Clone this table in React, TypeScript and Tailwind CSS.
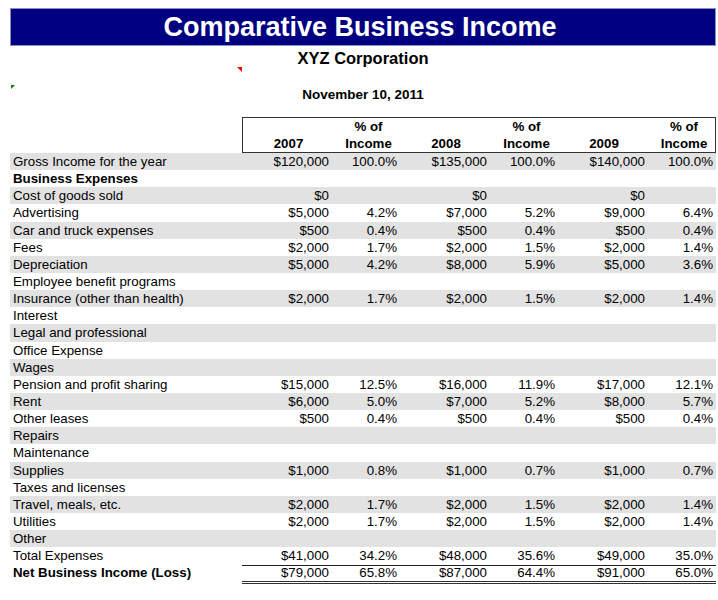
import React from "react";

type Row = { label: string; bold?: boolean; vals?: string[] };

const rows: Row[] = [
  { label: "Gross Income for the year", vals: ["$120,000", "100.0%", "$135,000", "100.0%", "$140,000", "100.0%"] },
  { label: "Business Expenses", bold: true },
  { label: "Cost of goods sold", vals: ["$0", "", "$0", "", "$0", ""] },
  { label: "Advertising", vals: ["$5,000", "4.2%", "$7,000", "5.2%", "$9,000", "6.4%"] },
  { label: "Car and truck expenses", vals: ["$500", "0.4%", "$500", "0.4%", "$500", "0.4%"] },
  { label: "Fees", vals: ["$2,000", "1.7%", "$2,000", "1.5%", "$2,000", "1.4%"] },
  { label: "Depreciation", vals: ["$5,000", "4.2%", "$8,000", "5.9%", "$5,000", "3.6%"] },
  { label: "Employee benefit programs" },
  { label: "Insurance (other than health)", vals: ["$2,000", "1.7%", "$2,000", "1.5%", "$2,000", "1.4%"] },
  { label: "Interest" },
  { label: "Legal and professional" },
  { label: "Office Expense" },
  { label: "Wages" },
  { label: "Pension and profit sharing", vals: ["$15,000", "12.5%", "$16,000", "11.9%", "$17,000", "12.1%"] },
  { label: "Rent", vals: ["$6,000", "5.0%", "$7,000", "5.2%", "$8,000", "5.7%"] },
  { label: "Other leases", vals: ["$500", "0.4%", "$500", "0.4%", "$500", "0.4%"] },
  { label: "Repairs" },
  { label: "Maintenance" },
  { label: "Supplies", vals: ["$1,000", "0.8%", "$1,000", "0.7%", "$1,000", "0.7%"] },
  { label: "Taxes and licenses" },
  { label: "Travel, meals, etc.", vals: ["$2,000", "1.7%", "$2,000", "1.5%", "$2,000", "1.4%"] },
  { label: "Utilities", vals: ["$2,000", "1.7%", "$2,000", "1.5%", "$2,000", "1.4%"] },
  { label: "Other" },
  { label: "Total Expenses", vals: ["$41,000", "34.2%", "$48,000", "35.6%", "$49,000", "35.0%"] },
  { label: "Net Business Income (Loss)", bold: true, vals: ["$79,000", "65.8%", "$87,000", "64.4%", "$91,000", "65.0%"] },
];

const cols = "grid grid-cols-[232px_92px_66px_92px_66px_92px_66px]";

export default function App() {
  return (
    <div className="relative w-[718px] h-[600px] bg-white text-black font-['Liberation_Sans',Arial,sans-serif] pl-[10px] pt-[8px]">
      {/* title bar */}
      <div className="w-[706px] h-[38px] bg-[#000080] border border-[#8c8cc8] flex items-center justify-center pr-[6px]">
        <span className="text-white font-bold text-[27px] leading-none">Comparative Business Income</span>
      </div>
      <div className="w-[706px] h-[24px] leading-[24px] text-center font-bold text-[16.5px]">XYZ Corporation</div>
      <div className="w-[706px] mt-[15px] h-[20px] leading-[20px] text-center font-bold text-[13.5px]">November 10, 2011</div>

      {/* cell markers */}
      <div className="absolute left-[237px] top-[67px] w-0 h-0 border-t-[5px] border-l-[5px] border-t-[#ff0000] border-l-transparent" />
      <div className="absolute left-[11px] top-[85px] w-0 h-0 border-t-[4px] border-r-[4px] border-t-[#008000] border-r-transparent" />

      {/* column headers */}
      <div className={`${cols} mt-[12px] w-[706px] text-[13.3px] font-bold`}>
        <div />
        <div className="col-span-6 h-[36px] border border-[#333]">
          <div className="grid grid-cols-[91px_66px_92px_66px_92px_65px] h-full">
            {["2007", "2008", "2009"].map((y) => (
              <React.Fragment key={y}>
                <div className="flex items-end justify-center leading-[16px]">{y}</div>
                <div className="flex flex-col items-center justify-end pl-[3px] leading-[16.5px]">
                  <span>% of</span>
                  <span>Income</span>
                </div>
              </React.Fragment>
            ))}
          </div>
        </div>
      </div>

      {/* body */}
      <div className="w-[706px] text-[13.3px]">
        {rows.map((r, i) => {
          const gray = i % 2 === 0 && i < 23;
          const total = i === 23;
          const net = i === 24;
          return (
            <div
              key={r.label}
              className={`${cols} h-[17.15px] leading-[17.5px] ${gray ? "bg-[#e2e2e2]" : ""}`}
            >
              <div className={`pl-[3px] whitespace-nowrap ${r.bold ? "font-bold" : ""}`}>{r.label}</div>
              {(r.vals ?? ["", "", "", "", "", ""]).map((v, j) => (
                <div
                  key={j}
                  className={`text-right whitespace-nowrap ${j % 2 === 0 ? "pr-[5px]" : "pr-[3px]"} ${
                    total ? "border-b border-[#222]" : ""
                  } ${net ? "border-b-[3px] border-double border-[#333] h-[20px]" : ""}`}
                >
                  {v}
                </div>
              ))}
            </div>
          );
        })}
      </div>
    </div>
  );
}
